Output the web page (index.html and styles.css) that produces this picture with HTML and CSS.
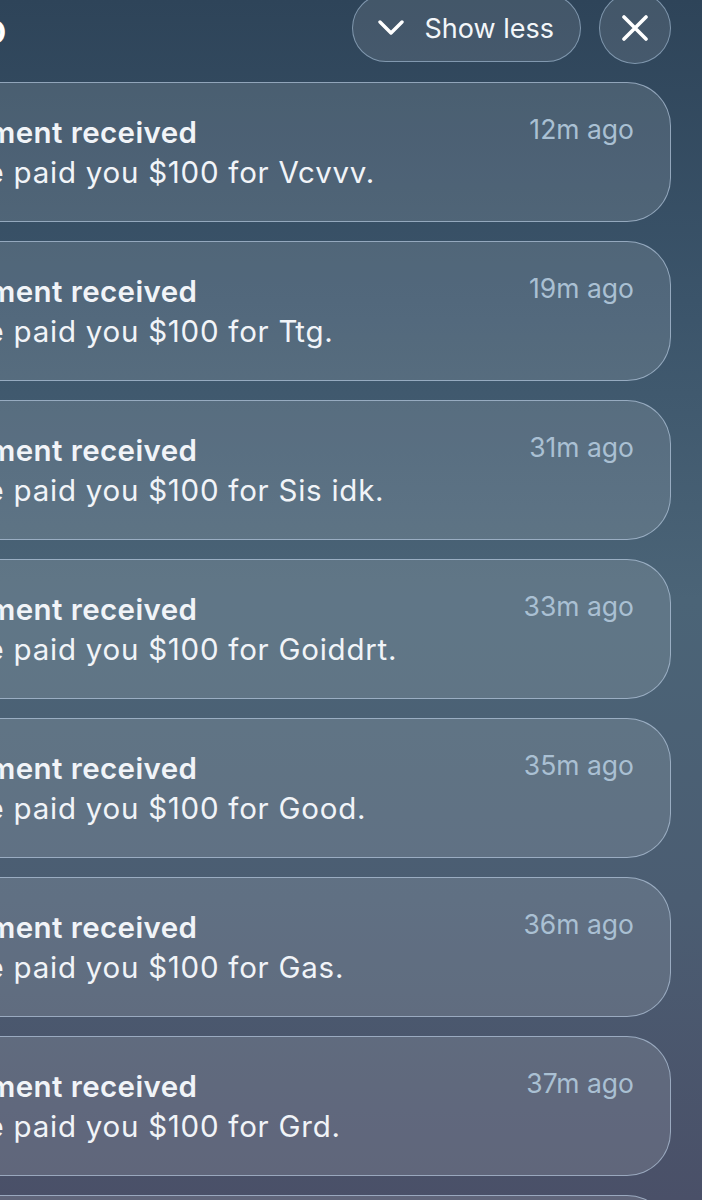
FILE: index.html
```html
<!DOCTYPE html>
<html lang="en">
    <head>
        <meta charset="utf-8">
        <meta name="viewport" content="width=device-width, initial-scale=1.0">
        <title>Notifications</title>

        <link rel="stylesheet" href="styles.css">
    </head>
    <body>
        <main class="stack">
            <div class="group-head">
                <h2 class="app-name">Venmo</h2>
                <button type="button" class="pill">
                    <svg width="26" height="16" viewBox="0 0 26 16"><polyline points="2,2 13,13 24,2" fill="none" stroke="#fff" stroke-width="3.4" stroke-linecap="round" stroke-linejoin="round"/></svg>
                    <span>Show less</span>
                </button>
                <button type="button" class="close">
                    <svg width="26" height="26" viewBox="0 0 26 26"><path d="M2 2 L24 24 M24 2 L2 24" fill="none" stroke="#fff" stroke-width="3.6" stroke-linecap="round"/></svg>
                </button>
            </div>

            <div class="card">
                <div class="text">
                    <div class="title">Payment received</div>
                    <div class="body">Mike paid you $100 for Vcvvv.</div>
                </div>
                <div class="time">12m ago</div>
            </div>
            <div class="card">
                <div class="text">
                    <div class="title">Payment received</div>
                    <div class="body">Mike paid you $100 for Ttg.</div>
                </div>
                <div class="time">19m ago</div>
            </div>
            <div class="card">
                <div class="text">
                    <div class="title">Payment received</div>
                    <div class="body">Mike paid you $100 for Sis idk.</div>
                </div>
                <div class="time">31m ago</div>
            </div>
            <div class="card">
                <div class="text">
                    <div class="title">Payment received</div>
                    <div class="body">Mike paid you $100 for Goiddrt.</div>
                </div>
                <div class="time">33m ago</div>
            </div>
            <div class="card">
                <div class="text">
                    <div class="title">Payment received</div>
                    <div class="body">Mike paid you $100 for Good.</div>
                </div>
                <div class="time">35m ago</div>
            </div>
            <div class="card">
                <div class="text">
                    <div class="title">Payment received</div>
                    <div class="body">Mike paid you $100 for Gas.</div>
                </div>
                <div class="time">36m ago</div>
            </div>
            <div class="card">
                <div class="text">
                    <div class="title">Payment received</div>
                    <div class="body">Mike paid you $100 for Grd.</div>
                </div>
                <div class="time">37m ago</div>
            </div>
            <div class="card">
                <div class="text">
                    <div class="title">Payment received</div>
                    <div class="body">Mike paid you $100 for Hi.</div>
                </div>
                <div class="time">40m ago</div>
            </div>
        </main>
    </body>
</html>
```

FILE: styles.css
```css
html, body {
    margin: 0;
    height: 1200px;
    overflow: hidden;
}
body {
    font-family: Inter, "Noto Sans", sans-serif;
    background: linear-gradient(180deg, #2e4459 0%, #3b546a 25%, #4b6477 50%, #4b5d72 75%, #4a5068 100%);
    color: #f1f4f8;
}
.stack {
    display: flex;
    flex-direction: column;
    gap: 19px;
    margin-left: -160px;
    margin-top: -7px;
    width: 831px;
}
.group-head {
    display: flex;
    align-items: center;
    gap: 18px;
    padding-left: 20px;
    height: 70px;
}
.app-name {
    margin: 0;
    margin-right: auto;
    font-size: 44px;
    font-weight: 500;
    color: #fff;
}
.pill {
    display: flex;
    align-items: center;
    gap: 21px;
    height: 68px;
    padding: 0 26px 0 25px;
    border-radius: 34px;
    border: 1.5px solid rgba(170, 195, 220, 0.6);
    background: rgba(255, 255, 255, 0.1);
    color: #f3f6f9;
    font-family: Inter, sans-serif;
    font-size: 27px;
}
.close {
    display: flex;
    align-items: center;
    justify-content: center;
    width: 72px;
    height: 72px;
    padding: 0;
    border-radius: 50%;
    border: 1.5px solid rgba(170, 195, 220, 0.6);
    background: rgba(255, 255, 255, 0.1);
}
.card {
    display: flex;
    justify-content: space-between;
    height: 140px;
    box-sizing: border-box;
    padding: 29px 36px 0 94px;
    border-radius: 44px;
    border: 1.5px solid rgba(190, 210, 232, 0.62);
    background: rgba(255, 255, 255, 0.12);
}
.title {
    font-size: 29.5px;
    font-weight: 600;
    line-height: 40px;
    letter-spacing: 0.4px;
}
.body {
    font-size: 29.5px;
    line-height: 40px;
    letter-spacing: 0.75px;
}
.time {
    font-size: 26.5px;
    line-height: 34px;
    color: #aac0d3;
}
```
